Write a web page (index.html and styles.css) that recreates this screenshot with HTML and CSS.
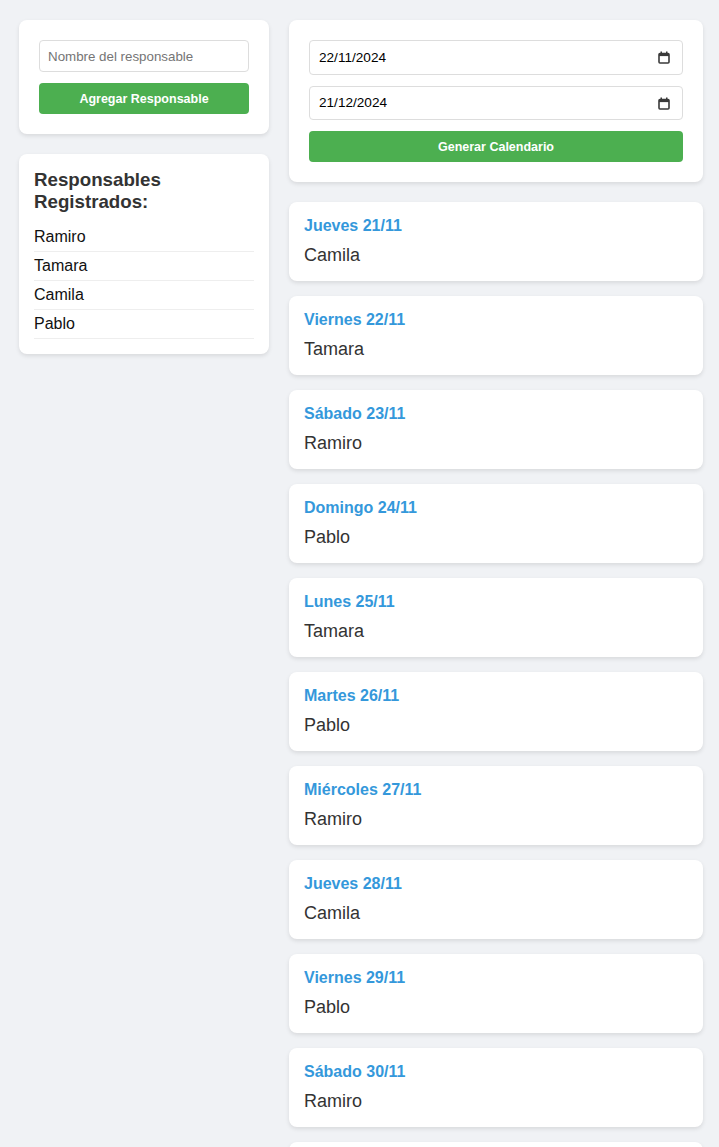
FILE: index.html
```html
<!DOCTYPE html>
<html lang="es">
<head>
<meta charset="utf-8">
<title>Calendario de responsables</title>
<link rel="stylesheet" href="styles.css">
</head>
<body>
<div class="layout">
  <aside class="side">
    <div class="card form-card">
      <input class="field" type="text" placeholder="Nombre del responsable">
      <button class="btn">Agregar Responsable</button>
    </div>
    <div class="card list-card">
      <h3 class="list-title">Responsables Registrados:</h3>
      <ul class="people">
        <li>Ramiro</li>
        <li>Tamara</li>
        <li>Camila</li>
        <li>Pablo</li>
      </ul>
    </div>
  </aside>
  <main class="main">
    <div class="card form-card">
      <div class="date-wrap">
        <input class="field date" type="text" value="22/11/2024">
        <svg class="cal-icon" width="12" height="13" viewBox="0 0 12 13" aria-hidden="true">
          <rect x="2.5" y="0.5" width="1.5" height="2.5" fill="#3a3a3a"/>
          <rect x="8" y="0.5" width="1.5" height="2.5" fill="#3a3a3a"/>
          <rect x="1" y="2.5" width="10" height="9.5" rx="1" fill="none" stroke="#3a3a3a" stroke-width="1.6"/>
          <rect x="1" y="2.5" width="10" height="2.6" fill="#3a3a3a"/>
        </svg>
      </div>
      <div class="date-wrap">
        <input class="field date" type="text" value="21/12/2024">
        <svg class="cal-icon" width="12" height="13" viewBox="0 0 12 13" aria-hidden="true">
          <rect x="2.5" y="0.5" width="1.5" height="2.5" fill="#3a3a3a"/>
          <rect x="8" y="0.5" width="1.5" height="2.5" fill="#3a3a3a"/>
          <rect x="1" y="2.5" width="10" height="9.5" rx="1" fill="none" stroke="#3a3a3a" stroke-width="1.6"/>
          <rect x="1" y="2.5" width="10" height="2.6" fill="#3a3a3a"/>
        </svg>
      </div>
      <button class="btn">Generar Calendario</button>
    </div>
    <div class="day"><div class="day-title">Jueves 21/11</div><div class="day-name">Camila</div></div>
    <div class="day"><div class="day-title">Viernes 22/11</div><div class="day-name">Tamara</div></div>
    <div class="day"><div class="day-title">Sábado 23/11</div><div class="day-name">Ramiro</div></div>
    <div class="day"><div class="day-title">Domingo 24/11</div><div class="day-name">Pablo</div></div>
    <div class="day"><div class="day-title">Lunes 25/11</div><div class="day-name">Tamara</div></div>
    <div class="day"><div class="day-title">Martes 26/11</div><div class="day-name">Pablo</div></div>
    <div class="day"><div class="day-title">Miércoles 27/11</div><div class="day-name">Ramiro</div></div>
    <div class="day"><div class="day-title">Jueves 28/11</div><div class="day-name">Camila</div></div>
    <div class="day"><div class="day-title">Viernes 29/11</div><div class="day-name">Pablo</div></div>
    <div class="day"><div class="day-title">Sábado 30/11</div><div class="day-name">Ramiro</div></div>
    <div class="day"><div class="day-title">Domingo 01/12</div><div class="day-name">Tamara</div></div>
  </main>
</div>
</body>
</html>
```

FILE: styles.css
```css
html, body {
  margin: 0;
  padding: 0;
  background: #f0f2f5;
  font-family: "Liberation Sans", Arial, sans-serif;
  color: #333;
}

.layout {
  display: flex;
  align-items: flex-start;
  gap: 20px;
  padding: 20px 16px 20px 19px;
}

.side {
  width: 250px;
  flex: 0 0 250px;
  display: flex;
  flex-direction: column;
  gap: 20px;
}

.main {
  flex: 1;
  display: flex;
  flex-direction: column;
  gap: 15px;
}

.card {
  background: #fff;
  border-radius: 8px;
  box-shadow: 0 2px 4px rgba(0, 0, 0, 0.1);
}

.form-card {
  padding: 20px;
  display: flex;
  flex-direction: column;
  gap: 11px;
}

.main .form-card {
  margin-bottom: 5px;
}

.field {
  box-sizing: border-box;
  width: 100%;
  height: 32px;
  margin: 0;
  padding: 0 8px;
  border: 1px solid #ddd;
  border-radius: 4px;
  font-family: "Liberation Sans", Arial, sans-serif;
  font-size: 13.33px;
  color: #000;
  background: #fff;
  outline: none;
}

.field::placeholder {
  color: #757575;
}

.date-wrap {
  position: relative;
  display: flex;
}

.field.date {
  height: 34.5px;
  padding: 0 30px 0 9px;
  font-size: 13.6px;
}

.cal-icon {
  position: absolute;
  right: 13px;
  top: 50%;
  margin-top: -6px;
}

.btn {
  height: 31px;
  margin: 0;
  border: none;
  border-radius: 4px;
  background: #4caf50;
  color: #fff;
  font-family: "Liberation Sans", Arial, sans-serif;
  font-size: 12.5px;
  font-weight: bold;
  cursor: pointer;
}

.list-card {
  padding: 15px;
}

.list-title {
  margin: 0 0 10px;
  font-size: 18.72px;
  font-weight: bold;
  color: #333;
}

.people {
  list-style: none;
  margin: 0;
  padding: 0;
}

.people li {
  padding: 5px 0;
  border-bottom: 1px solid #eee;
  font-size: 16px;
  color: #111;
}

.day {
  background: #fff;
  border-radius: 8px;
  box-shadow: 0 2px 4px rgba(0, 0, 0, 0.1);
  padding: 15px;
}

.day-title {
  font-size: 16px;
  font-weight: bold;
  color: #3498db;
  margin-bottom: 10px;
}

.day-name {
  font-size: 18px;
  color: #333;
}
```
